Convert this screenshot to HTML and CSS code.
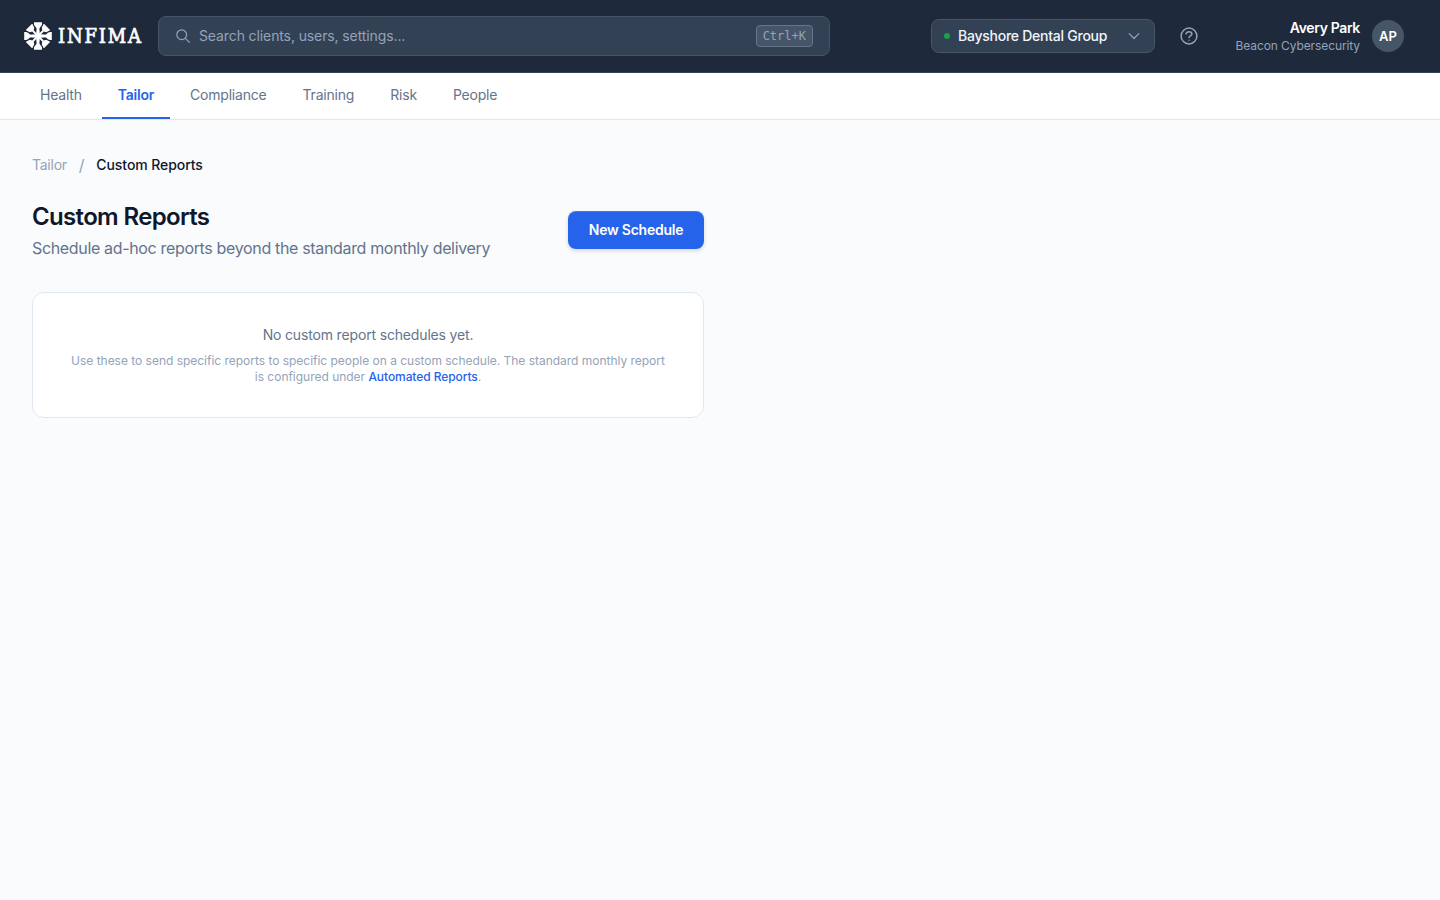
FILE: index.html
```html
<!DOCTYPE html>
<html lang="en">
<head>
<meta charset="utf-8">
<title>Custom Reports</title>
<link rel="stylesheet" href="styles.css">
</head>
<body>
<header class="topbar">
  <a class="logo">
    <svg class="logo-mark" viewBox="-14 -14 28 28">
      <defs>
        <path id="arm" d="M-1.8 0 L-1.5 -8 L-4 -10.8 L-4 -13.8 H4 L4 -10.8 L1.5 -8 L1.8 0Z"/>
        <path id="diag" d="M-1 0 L-1 -7.2 L-4.2 -8.8 L-4.4 -12.8 H4.4 L4.2 -8.8 L1 -7.2 L1 0Z"/>
      </defs>
      <g fill="#fff">
        <use href="#arm"/><use href="#arm" transform="rotate(90)"/><use href="#arm" transform="rotate(180)"/><use href="#arm" transform="rotate(270)"/>
        <use href="#diag" transform="rotate(45)"/><use href="#diag" transform="rotate(135)"/><use href="#diag" transform="rotate(225)"/><use href="#diag" transform="rotate(315)"/>
      </g>
      <path class="logo-cuts" d="M-4.9 -14 L-4.4 -10.8 L-2 -6 M4.9 -14 L4.4 -10.8 L2 -6 M-4.9 14 L-4.4 10.8 L-2 6 M4.9 14 L4.4 10.8 L2 6 M-14 -4.9 L-10.8 -4.4 L-6 -2 M-14 4.9 L-10.8 4.4 L-6 2 M14 -4.9 L10.8 -4.4 L6 -2 M14 4.9 L10.8 4.4 L6 2"/>
    </svg>
    <svg class="logo-word" viewBox="0 0 85 28"><text x="0" y="21.3" textLength="83" lengthAdjust="spacing">INFIMA</text></svg>
  </a>
  <div class="search">
    <svg class="search-icon" viewBox="0 0 16 16"><circle cx="6.7" cy="6.7" r="4.9"/><path d="M10.3 10.3 14.4 14.4"/></svg>
    <span class="search-text">Search clients, users, settings...</span>
    <kbd class="kbd">Ctrl+K</kbd>
  </div>
  <div class="right">
    <div class="client"><i class="dot"></i><span class="client-name">Bayshore Dental Group</span><svg class="chevron" viewBox="0 0 12 12"><path d="M1.2 3.7 6 8.5 10.8 3.7"/></svg></div>
    <svg class="help" viewBox="0 0 20 20"><circle cx="10" cy="10" r="7.9"/><path d="M7.1 8C7.3 6.5 8.5 5.7 10 5.7s2.9.8 2.9 2.3c0 1.7-2.9 1.9-2.9 3.6M10 14.2v.05"/></svg>
    <div class="user"><div class="user-name">Avery Park</div><div class="user-org">Beacon Cybersecurity</div></div>
    <div class="avatar">AP</div>
  </div>
</header>
<nav class="tabs">
  <a class="tab">Health</a><a class="tab active">Tailor</a><a class="tab">Compliance</a><a class="tab">Training</a><a class="tab">Risk</a><a class="tab">People</a>
</nav>
<main class="main">
  <div class="crumbs"><span>Tailor</span><span class="slash">/</span><span class="current">Custom Reports</span></div>
  <div class="heading">
    <div><h1 class="title">Custom Reports</h1><p class="subtitle">Schedule ad-hoc reports beyond the standard monthly delivery</p></div>
    <button class="button">New Schedule</button>
  </div>
  <section class="card">
    <p class="empty">No custom report schedules yet.</p>
    <p class="hint">Use these to send specific reports to specific people on a custom schedule. The standard monthly report is configured under <a class="link">Automated Reports</a>.</p>
  </section>
</main>
</body>
</html>
```
FILE: styles.css
```css
* { box-sizing: border-box; }
body { margin: 0; min-height: 100vh; background: #f9fbfd; font-family: Inter, "Liberation Sans", sans-serif; font-size: 14px; line-height: 20px; color: #0f172a; }
h1, p { margin: 0; }
.topbar { height: 73px; background: #1e293b; border-bottom: 1px solid #334155; display: flex; align-items: center; padding: 0 36px 0 24px; }
.logo { display: flex; align-items: center; gap: 6px; width: 134px; flex: none; }
.logo-mark { width: 28px; height: 28px; flex: none; }
.logo-cuts { fill: none; stroke: #1e293b; stroke-width: 1.1; }
.logo-word { width: 85px; height: 28px; flex: none; overflow: visible; }
.logo-word text { font-family: "DejaVu Serif Condensed", "DejaVu Serif", serif; font-stretch: condensed; font-size: 20px; fill: #fff; stroke: #fff; stroke-width: 0.7px; }
.search { width: 672px; height: 40px; display: flex; align-items: center; padding: 0 16px; border: 1px solid #475569; border-radius: 8px; background: #334155; color: #94a3b8; }
.search-icon { width: 16px; height: 16px; margin-right: 8px; fill: none; stroke: #94a3b8; stroke-width: 1.2; stroke-linecap: round; }
.search-text { flex: 1; letter-spacing: -0.11px; }
.kbd { height: 22px; padding: 0 6px; border: 1px solid #64748b; border-radius: 4px; background: #475569; font: 12px/20px "DejaVu Sans Mono", monospace; color: #94a3b8; }
.right { margin-left: auto; display: flex; align-items: center; }
.client { width: 224px; height: 34px; display: flex; align-items: center; padding: 0 14px 0 12px; border: 1px solid #475569; border-radius: 8px; background: #334155; color: #f1f5f9; font-weight: 500; }
.dot { width: 6px; height: 6px; border-radius: 50%; background: #16a34a; margin-right: 8px; }
.client-name { flex: 1; letter-spacing: -0.25px; }
.chevron { width: 12px; height: 12px; fill: none; stroke: #94a3b8; stroke-width: 1.2; stroke-linecap: round; stroke-linejoin: round; }
.help { width: 20px; height: 20px; margin-left: 24px; fill: none; stroke: #94a3b8; stroke-width: 1.5; stroke-linecap: round; stroke-linejoin: round; }
.user { width: 125px; margin: 0 12px 0 36px; text-align: right; white-space: nowrap; }
.user-name { line-height: 18px; color: #fff; font-weight: 600; letter-spacing: -0.35px; }
.user-org { font-size: 12px; line-height: 17px; color: #94a3b8; letter-spacing: -0.1px; }
.avatar { width: 32px; height: 32px; border-radius: 50%; background: #475569; color: #fff; font-weight: 600; font-size: 13px; line-height: 32px; text-align: center; }
.tabs { height: 47px; display: flex; gap: 4px; padding: 0 24px; background: #fff; border-bottom: 1px solid #e2e8f0; }
.tab { height: 46px; padding: 12px 16px 0; line-height: 20px; color: #64748b; letter-spacing: -0.2px; }
.active { color: #2563eb; font-weight: 600; letter-spacing: -0.25px; border-bottom: 2px solid #2563eb; }
.main { width: 736px; padding: 35px 32px; }
.crumbs { display: flex; gap: 12px; color: #94a3b8; letter-spacing: -0.25px; }
.slash { font-size: 16px; }
.current { color: #0f172a; font-weight: 500; letter-spacing: -0.08px; }
.heading { display: flex; justify-content: space-between; align-items: center; margin-top: 25px; }
.title { padding-top: 1px; font-size: 24px; line-height: 32px; font-weight: 600; letter-spacing: -0.66px; }
.subtitle { margin-top: 3px; font-size: 16px; line-height: 24px; color: #64748b; letter-spacing: -0.34px; }
.button { width: 136px; height: 38px; border: 0; border-radius: 8px; background: #2563eb; color: #fff; font: 600 14px/20px Inter, sans-serif; letter-spacing: -0.25px; box-shadow: 0 2px 4px rgba(15,23,42,.15), inset 0 1px 0 rgba(255,255,255,.15); }
.card { height: 126px; margin-top: 32px; padding: 32px; border: 1px solid #e2e8f0; border-radius: 12px; background: #fff; text-align: center; }
.empty { color: #64748b; letter-spacing: -0.16px; }
.hint { margin-top: 8px; font-size: 12px; line-height: 16px; color: #94a3b8; letter-spacing: -0.02px; }
.link { color: #2563eb; font-weight: 500; letter-spacing: -0.08px; }
```
